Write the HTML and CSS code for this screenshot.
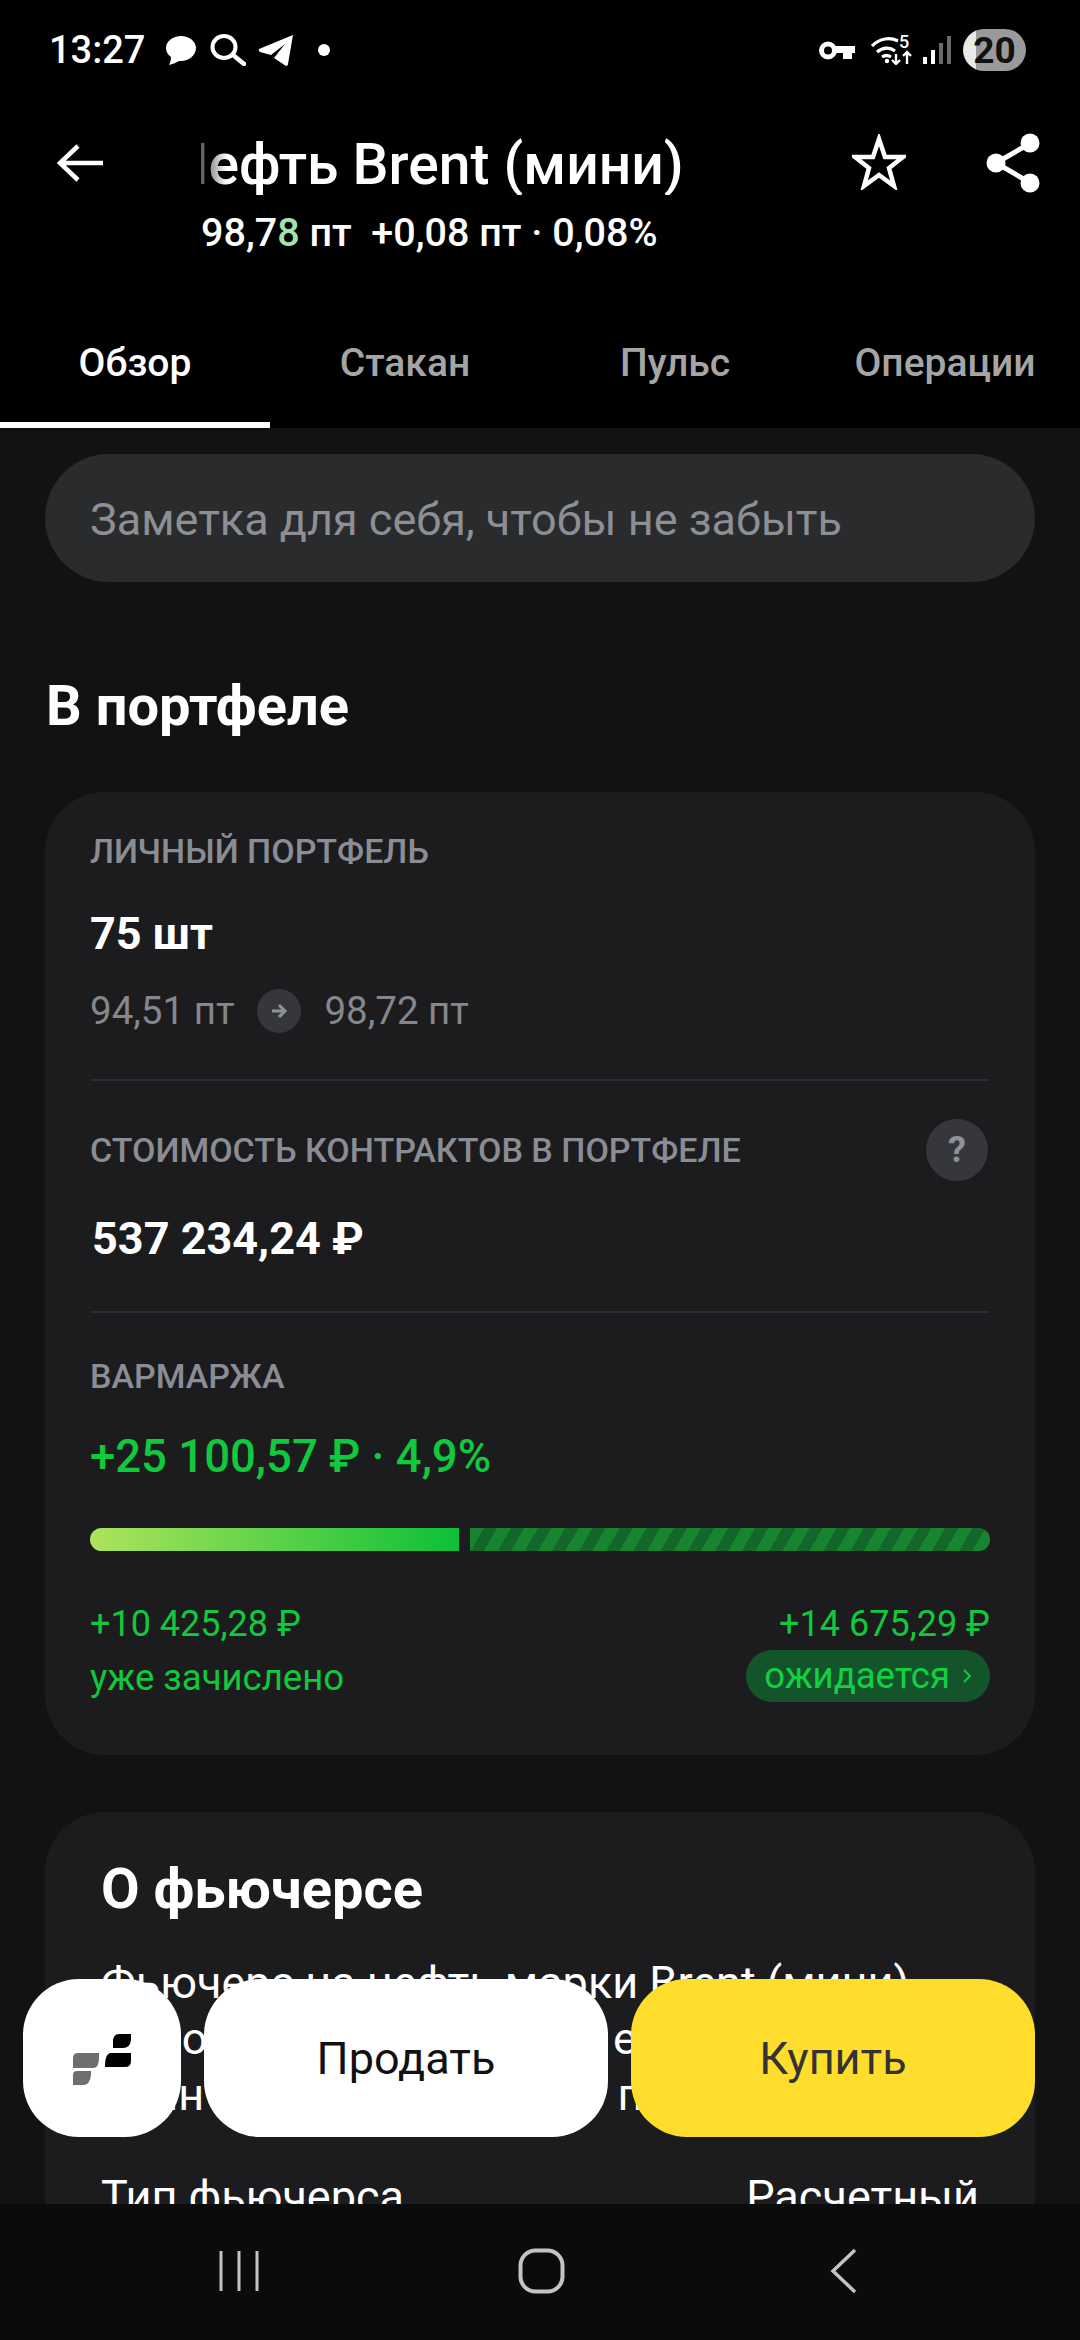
FILE: index.html
```html
<!DOCTYPE html>
<html lang="ru">
<head>
    <meta charset="UTF-8">
    <meta name="viewport" content="width=device-width, initial-scale=1.0">
    <title>Нефть Brent (мини)</title>
    <link rel="stylesheet" href="styles.css">
</head>
<body>
    <div class="screen">
        <div class="status">
            <div class="status-left">
                <span class="clock">13:27</span>
                <svg class="ic-chat" viewBox="0 0 30 29"><path d="M15 0C7 0 0 5 0 12c0 4 2 7 5 9 0 3-1 6-2 8 3-1 7-2 10-4h2c8 0 15-6 15-13S23 0 15 0z" fill="#fff"/></svg>
                <svg class="ic-search" viewBox="0 0 36 32"><ellipse cx="14" cy="13" rx="11.500" ry="11" fill="none" stroke="#fff" stroke-width="4"/><path d="M23 21l11 9" stroke="#fff" stroke-width="4.500" stroke-linecap="round"/></svg>
                <svg class="ic-tg" viewBox="0 0 35 31"><path d="M35 0L1 14q-1 2 1 3l11 3L27 9 16 23l12 8q2 0 2-2z" fill="#fff"/></svg>
                <span class="dot"></span>
            </div>
            <div class="status-right">
                <svg class="ic-key" viewBox="0 0 36 19"><circle cx="9" cy="9.500" r="6.500" fill="none" stroke="#fff" stroke-width="5"/><path d="M14 5h22v7h-3v6h-9v-6H14z" fill="#fff"/></svg>
                <svg class="ic-wifi" viewBox="0 0 41 30">
                    <path d="M1 11C9 3 19 2 27 6M6 17c6-5 13-5 18-1M11 22c3-2 6-2 9 0" fill="none" stroke="#fff" stroke-width="3.200"/>
                    <circle cx="16" cy="26" r="2.200" fill="#fff"/>
                    <text class="wifi-num" x="28" y="13">5</text>
                    <path d="M25 19v10M21 25l4 4 4-4M36 29V17M32 21l4-4 4 4" fill="none" stroke="#fff" stroke-width="2.400"/>
                </svg>
                <div class="signal">
                    <span class="s1"></span><span class="s2"></span><span class="s3 off"></span><span class="s4 off"></span>
                </div>
                <div class="battery"><span class="battery-num">20</span></div>
            </div>
        </div>

        <div class="topbar">
            <svg class="ic-back" viewBox="0 0 48 40"><path d="M22 3L4 20l18 17M4 20h43" fill="none" stroke="#fff" stroke-width="4.500"/></svg>
            <div class="title-block">
                <div class="title-clip"><div class="title">Нефть Brent (мини)</div></div>
                <div class="quote">98,7<span class="tick">8</span> пт&nbsp; +0,08 пт · 0,08%</div>
            </div>
            <svg class="ic-star" viewBox="0 0 54 56"><path d="M27 5l6 18h18L37 34l5 18-15-11-15 11 5-18L3 23h18z" fill="none" stroke="#fff" stroke-width="4.500" stroke-linejoin="miter"/></svg>
            <svg class="ic-share" viewBox="0 0 54 60"><path d="M43 11L10 30l33 19" fill="none" stroke="#fff" stroke-width="5"/><circle cx="44" cy="10" r="9.500" fill="#fff"/><circle cx="10" cy="30" r="9.500" fill="#fff"/><circle cx="44" cy="50" r="9.500" fill="#fff"/></svg>
        </div>

        <div class="tabs">
            <div class="tab active">Обзор</div>
            <div class="tab">Стакан</div>
            <div class="tab">Пульс</div>
            <div class="tab">Операции</div>
        </div>

        <div class="content">
            <div class="note">Заметка для себя, чтобы не забыть</div>
            <h2 class="section-title">В портфеле</h2>

            <div class="card portfolio">
                <div class="block">
                    <div class="label">ЛИЧНЫЙ ПОРТФЕЛЬ</div>
                    <div class="value qty">75 шт</div>
                    <div class="prices">
                        <span>94,51 пт</span>
                        <span class="arrow-badge"><svg viewBox="0 0 20 20"><path d="M3 10h13M10 4l6 6-6 6" fill="none" stroke="#8f9198" stroke-width="3"/></svg></span>
                        <span>98,72 пт</span>
                    </div>
                </div>
                <div class="block">
                    <div class="label-row">
                        <div class="label">СТОИМОСТЬ КОНТРАКТОВ В ПОРТФЕЛЕ</div>
                        <div class="help">?</div>
                    </div>
                    <div class="value">537 234,24 ₽</div>
                </div>
                <div class="block last">
                    <div class="label">ВАРМАРЖА</div>
                    <div class="value green">+25 100,57 ₽ · 4,9%</div>
                    <div class="bar">
                        <div class="bar-done"></div>
                        <div class="bar-wait"></div>
                    </div>
                    <div class="split">
                        <div>
                            <div class="split-sum">+10 425,28 ₽</div>
                            <div class="split-note">уже зачислено</div>
                        </div>
                        <div class="split-right">
                            <div class="split-sum">+14 675,29 ₽</div>
                            <div class="pill">ожидается <svg viewBox="0 0 10 16"><path d="M2 2l6 6-6 6" fill="none" stroke="#12d043" stroke-width="1.800"/></svg></div>
                        </div>
                    </div>
                </div>
            </div>

            <div class="card about">
                <h2 class="about-title">О фьючерсе</h2>
                <p class="about-text">Фьючерс на нефть марки Brent (мини)<br>Его отличие от простых единиц —<br>один контракт равен 10 партиям</p>
                <div class="about-row"><span>Тип фьючерса</span><span>Расчетный</span></div>
            </div>

            <div class="actions">
                <div class="btn btn-logo">
                    <svg viewBox="0 0 58 51">
                        <path d="M5 19h21v5q0 10-6 10H0V24q0-5 5-5zM4 37h14v4q-1 10-8 10H0V41q0-4 4-4z" fill="#6e6e6e"/>
                        <path d="M46 0h12v6q-1 8-8 8H40V8q0-8 6-8zM38 19h20v8q0 6-6 6H32q0-14 6-14z" fill="#000"/>
                    </svg>
                </div>
                <div class="btn btn-sell">Продать</div>
                <div class="btn btn-buy">Купить</div>
            </div>
        </div>

        <div class="navbar">
            <svg class="ic-recent" viewBox="0 0 40 42"><path d="M2 1v40M20 1v40M38 1v40" stroke="#c4c4c4" stroke-width="3"/></svg>
            <svg class="ic-home" viewBox="0 0 47 46"><rect x="2.500" y="2.500" width="42" height="41" rx="15" fill="none" stroke="#c4c4c4" stroke-width="4"/></svg>
            <svg class="ic-nav-back" viewBox="0 0 27 46"><path d="M25 2L3 23l22 21" fill="none" stroke="#c4c4c4" stroke-width="3.500"/></svg>
        </div>
    </div>
</body>
</html>
```

FILE: styles.css
```css
* {
    box-sizing: border-box;
}
body {
    margin: 0;
    background: #000;
    font-family: 'Roboto', 'Liberation Sans', sans-serif;
    color: #fff;
}
.screen {
    width: 1080px;
    height: 2340px;
    display: flex;
    flex-direction: column;
    overflow: hidden;
    background: #111213;
}

/* status bar */
.status {
    height: 100px;
    background: #000;
    display: flex;
    justify-content: space-between;
    align-items: center;
    padding: 0 54px 0 49px;
    flex: none;
}
.status-left, .status-right {
    display: flex;
    align-items: center;
}
.clock {
    font-size: 38px;
    font-weight: 500;
    width: 117px;
}
.ic-chat { width: 30px; height: 29px; margin-right: 14px; }
.ic-search { width: 36px; height: 32px; margin-right: 12px; }
.ic-tg { width: 35px; height: 31px; margin-right: 25px; }
.dot {
    width: 12px;
    height: 12px;
    border-radius: 50%;
    background: #fff;
}
.ic-key { width: 36px; height: 19px; margin-right: 16px; }
.ic-wifi { width: 41px; height: 30px; margin-right: 11px; }
.wifi-num {
    font-size: 18px;
    font-weight: 500;
    fill: #fff;
}
.signal {
    display: flex;
    align-items: flex-end;
    gap: 4px;
    height: 28px;
    margin-right: 12px;
}
.signal span {
    width: 4px;
    background: #fff;
}
.signal .off { background: #6a6a6a; }
.s1 { height: 7px; }
.s2 { height: 14px; }
.s3 { height: 21px; }
.s4 { height: 28px; }
.battery {
    width: 63px;
    height: 42px;
    border-radius: 21px;
    background: linear-gradient(90deg, #e9e9e9 0, #e9e9e9 13px, #9a9a9a 13px);
    display: flex;
    align-items: center;
    justify-content: center;
}
.battery-num {
    font-size: 37px;
    font-weight: 700;
    color: #111;
}

/* header */
.topbar {
    height: 200px;
    background: #000;
    display: flex;
    align-items: flex-start;
    padding: 33px 40px 0 56px;
    flex: none;
}
.ic-back { width: 48px; height: 40px; margin-top: 10px; margin-right: 97px; flex: none; }
.title-block { flex: 1; padding-top: 2px; }
.title-clip {
    width: 510px;
    overflow: hidden;
    -webkit-mask-image: linear-gradient(90deg, rgba(255,255,255,.35) 0, #fff 26px);
    mask-image: linear-gradient(90deg, rgba(255,255,255,.35) 0, #fff 26px);
}
.title {
    font-size: 57px;
    line-height: 60px;
    font-weight: 500;
    white-space: nowrap;
    margin-left: -33px;
}
.quote {
    font-size: 39.500px;
    line-height: 46px;
    margin-top: 15px;
    font-weight: 500;
    white-space: nowrap;
}
.tick { color: #a5e3ae; }
.ic-star { width: 54px; height: 56px; margin-top: 1px; margin-right: 80px; flex: none; }
.ic-share { width: 54px; height: 60px; flex: none; }

/* tabs */
.tabs {
    height: 128px;
    background: #000;
    display: grid;
    grid-template-columns: repeat(4, 1fr);
    flex: none;
}
.tab {
    font-size: 39px;
    font-weight: 500;
    color: #a5a5a5;
    text-align: center;
    padding-top: 40px;
    line-height: 46px;
    border-bottom: 6px solid transparent;
}
.tab.active {
    color: #fff;
    border-bottom-color: #fff;
}

/* scrolling part */
.content {
    flex: 1;
    min-height: 0;
    position: relative;
    padding: 26px 45px 0;
    overflow: hidden;
}
.note {
    height: 128px;
    border-radius: 64px;
    background: #2a2b2d;
    color: #8d8f94;
    font-size: 45px;
    line-height: 132px;
    padding-left: 45px;
}
.section-title {
    margin: 92px 0 0 1px;
    font-size: 56px;
    line-height: 64px;
    font-weight: 700;
}
.card {
    background: #1c1c1e;
    border-radius: 60px;
}
.portfolio {
    margin-top: 54px;
    height: 963px;
    padding: 0 45px;
}
.block {
    border-bottom: 2px solid #2c2d30;
}
.block.last {
    border-bottom: 0;
}
.block:nth-child(1) { height: 289px; padding-top: 39px; }
.block:nth-child(2) { height: 232px; padding-top: 38px; }
.label {
    font-size: 34px;
    line-height: 40px;
    font-weight: 500;
    color: #8b8d95;
}
.label-row {
    display: flex;
    justify-content: space-between;
    align-items: center;
    height: 62px;
}
.help {
    width: 62px;
    height: 62px;
    margin-right: 2px;
    border-radius: 50%;
    background: #36373a;
    color: #8f9198;
    font-size: 36px;
    font-weight: 700;
    text-align: center;
    line-height: 62px;
}
.value {
    font-size: 45px;
    line-height: 52px;
    font-weight: 700;
    margin-top: 36px;
}
.qty { margin-top: 37px; }
.block:nth-child(2) .value { margin-top: 32px; padding-left: 2px; }
.prices {
    display: flex;
    align-items: center;
    margin-top: 28px;
    font-size: 38.500px;
    line-height: 46px;
    color: #85878d;
}
.arrow-badge {
    width: 44px;
    height: 44px;
    border-radius: 50%;
    background: #36373a;
    margin: 0 23px;
    display: flex;
    align-items: center;
    justify-content: center;
}
.arrow-badge svg { width: 20px; height: 20px; }
.block.last { padding-top: 43px; }
.green {
    color: #10c93c;
    font-weight: 500;
    font-size: 45.500px;
    margin-top: 35px;
}
.bar {
    display: flex;
    gap: 11px;
    height: 23px;
    margin-top: 45px;
}
.bar-done {
    width: 369px;
    border-radius: 12px 0 0 12px;
    background: linear-gradient(90deg, #aee45a, #0cc038);
}
.bar-wait {
    flex: 1;
    border-radius: 0 12px 12px 0;
    background: repeating-linear-gradient(120deg, #17842f 0, #17842f 12px, #14672a 12px, #14672a 23.500px);
}
.split {
    display: flex;
    justify-content: space-between;
    margin-top: 51px;
    color: #10c93c;
}
.split-sum {
    font-size: 36px;
    line-height: 44px;
}
.split-note {
    font-size: 36.500px;
    line-height: 44px;
    margin-top: 10px;
}
.split-right {
    display: flex;
    flex-direction: column;
    align-items: flex-end;
}
.pill {
    height: 52px;
    margin-top: 4px;
    padding: 0 18px;
    border-radius: 26px;
    background: #14542a;
    color: #12d043;
    font-size: 36.500px;
    line-height: 52px;
    display: flex;
    align-items: center;
    gap: 12px;
}
.pill svg { width: 10px; height: 16px; }

.about {
    margin-top: 57px;
    height: 600px;
    padding: 47px 56px 0;
}
.about-title {
    margin: 0;
    font-size: 56px;
    line-height: 60px;
    font-weight: 700;
}
.about-text {
    margin: 36px 0 0;
    font-size: 45px;
    line-height: 56px;
    white-space: nowrap;
}
.about-row {
    display: flex;
    justify-content: space-between;
    font-size: 45px;
    line-height: 50px;
    margin-top: 49px;
}

/* buttons float over the text */
.actions {
    position: absolute;
    left: 23px;
    right: 45px;
    top: 1551px;
    display: flex;
    gap: 23px;
}
.btn {
    height: 158px;
    border-radius: 56px;
    font-size: 45px;
    display: flex;
    align-items: center;
    justify-content: center;
}
.btn-logo {
    width: 158px;
    background: #fff;
}
.btn-logo svg { width: 58px; height: 51px; margin-top: 3px; }
.btn-sell {
    flex: 1;
    background: #fff;
    color: #111;
}
.btn-buy {
    flex: 1;
    background: #ffdd2d;
    color: #333;
}

/* system nav */
.navbar {
    height: 136px;
    background: #0b0b0b;
    display: flex;
    align-items: center;
    flex: none;
    padding: 0 0 2px 219px;
}
.ic-recent { width: 40px; height: 42px; margin-right: 259px; }
.ic-home { width: 47px; height: 46px; margin-right: 265px; }
.ic-nav-back { width: 27px; height: 46px; }
```
